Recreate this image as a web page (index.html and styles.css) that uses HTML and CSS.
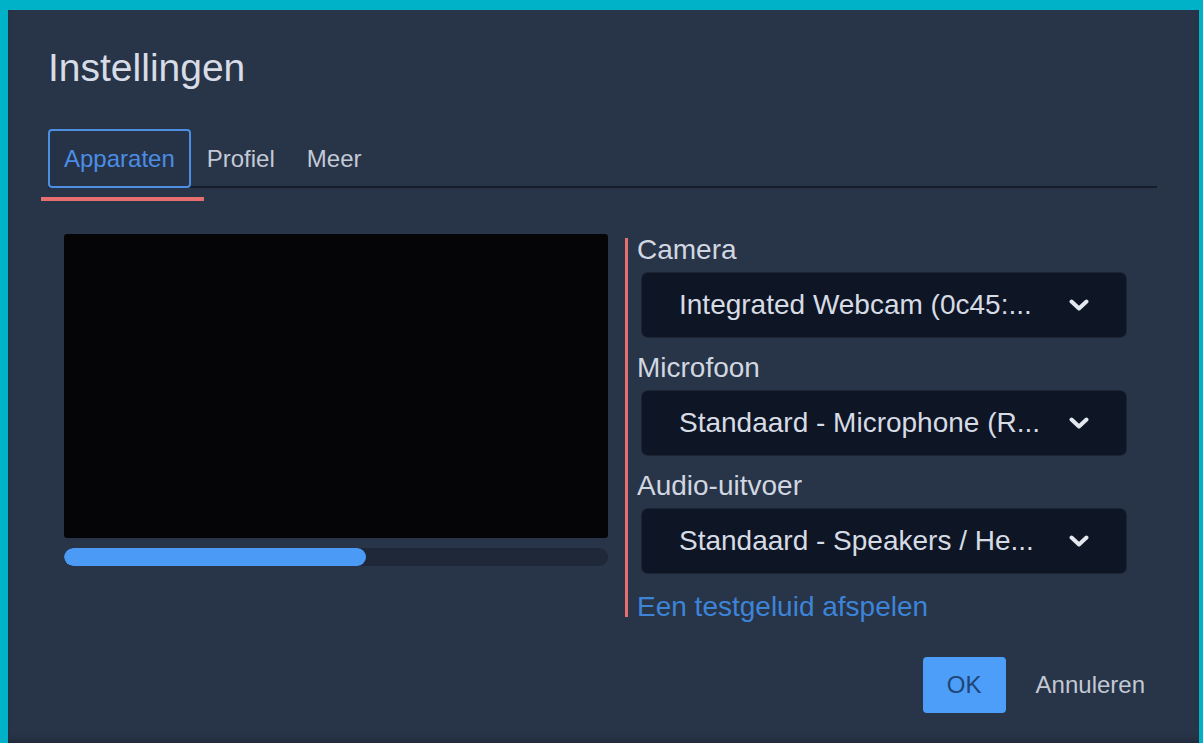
FILE: index.html
```html
<!DOCTYPE html>
<html lang="nl">
<head>
<meta charset="utf-8">
<title>Instellingen</title>
<link rel="stylesheet" href="styles.css">
</head>
<body>
<div class="dialog">
  <h1 class="dialog-title">Instellingen</h1>

  <div class="tabs">
    <button class="tab tab-active">Apparaten</button>
    <button class="tab">Profiel</button>
    <button class="tab">Meer</button>
    <span class="mark-under"></span>
  </div>

  <div class="devices">
    <div class="preview">
      <div class="video"></div>
      <div class="level"><div class="level-fill" style="width: 55.5%"></div></div>
    </div>

    <div class="fields">
      <span class="mark-side"></span>
      <label class="field-label">Camera</label>
      <div class="select">
        <span class="select-text">Integrated Webcam (0c45:...</span>
        <svg class="chevron" viewBox="0 0 20 12" width="20" height="12"><polyline points="2.5,2.5 10,9.5 17.5,2.5"/></svg>
      </div>

      <label class="field-label">Microfoon</label>
      <div class="select">
        <span class="select-text">Standaard - Microphone (R...</span>
        <svg class="chevron" viewBox="0 0 20 12" width="20" height="12"><polyline points="2.5,2.5 10,9.5 17.5,2.5"/></svg>
      </div>

      <label class="field-label">Audio-uitvoer</label>
      <div class="select">
        <span class="select-text">Standaard - Speakers / He...</span>
        <svg class="chevron" viewBox="0 0 20 12" width="20" height="12"><polyline points="2.5,2.5 10,9.5 17.5,2.5"/></svg>
      </div>

      <a class="test-link" href="#">Een testgeluid afspelen</a>
    </div>
  </div>

  <div class="actions">
    <button class="btn btn-primary">OK</button>
    <button class="btn btn-plain">Annuleren</button>
  </div>
</div>
</body>
</html>
```

FILE: styles.css
```css
* {
  box-sizing: border-box;
}

html, body {
  margin: 0;
  padding: 0;
}

body {
  background: #00b2c7;
  font-family: "Liberation Sans", Arial, sans-serif;
  width: 1203px;
  height: 743px;
  overflow: hidden;
}

.dialog {
  margin: 10px 4px 0 8px;
  height: 733px;
  background: #283447;
  padding: 36px 42px 0 40px;
  display: flex;
  flex-direction: column;
  box-shadow: inset 0 -6px 6px -4px rgba(20, 26, 40, 0.5);
}

.dialog-title {
  margin: 0;
  font-size: 39px;
  line-height: 44px;
  font-weight: normal;
  color: #d7dce6;
}

/* tab strip */
.tabs {
  position: relative;
  display: flex;
  margin-top: 39px;
  height: 59px;
  border-bottom: 2px solid #151d2b;
}

.tab {
  display: flex;
  align-items: center;
  height: 59px;
  margin-bottom: -2px;
  padding: 0 14px;
  border: 2px solid transparent;
  border-radius: 4px;
  background: none;
  font-family: inherit;
  font-size: 24px;
  color: #c3cad6;
  cursor: pointer;
}

.tab-active {
  border-color: #4c8fe2;
  color: #4b8de4;
  background: #263246;
}

.mark-under {
  position: absolute;
  left: -7px;
  top: 68px;
  width: 163px;
  height: 4px;
  background: #e56f6f;
}

/* devices panel */
.devices {
  display: flex;
  gap: 29px;
  margin-top: 46px;
  padding-left: 16px;
}

.preview {
  width: 544px;
  flex: none;
}

.video {
  height: 304px;
  background: #050508;
  border-radius: 3px;
}

.level {
  margin-top: 10px;
  height: 18px;
  border-radius: 9px;
  background: #1f2838;
  overflow: hidden;
}

.level-fill {
  height: 100%;
  background: #4b9af6;
  border-radius: 9px;
}

.fields {
  position: relative;
  width: 489px;
  display: flex;
  flex-direction: column;
}

.mark-side {
  position: absolute;
  left: -12px;
  top: 4px;
  width: 3px;
  height: 379px;
  background: #e56f6f;
}

.field-label {
  font-size: 28px;
  line-height: 32px;
  color: #d1d7e1;
}

.select {
  display: flex;
  align-items: center;
  justify-content: space-between;
  width: 484px;
  height: 64px;
  margin: 7px 0 15px 5px;
  padding: 0 37px;
  background: #0e1524;
  border-radius: 6px;
  box-shadow: 0 0 0 1px #1c2535;
}

.select-text {
  white-space: nowrap;
  font-size: 28px;
  color: #d6dbe4;
}

.chevron {
  flex: none;
  fill: none;
  stroke: #e3e7ee;
  stroke-width: 4;
  stroke-linecap: round;
  stroke-linejoin: round;
}

.test-link {
  margin-top: 3px;
  font-size: 28px;
  line-height: 32px;
  color: #3d84d8;
  text-decoration: none;
}

/* footer buttons */
.actions {
  display: flex;
  justify-content: flex-end;
  align-items: center;
  margin-top: 34px;
}

.btn {
  height: 56px;
  font-family: inherit;
  font-size: 24px;
  border: none;
  cursor: pointer;
}

.btn-primary {
  width: 83px;
  background: #4c9ef8;
  color: #1f4676;
  border-radius: 4px;
}

.btn-plain {
  margin-left: 18px;
  padding: 0 12px;
  background: none;
  color: #c2c9d4;
}
```
